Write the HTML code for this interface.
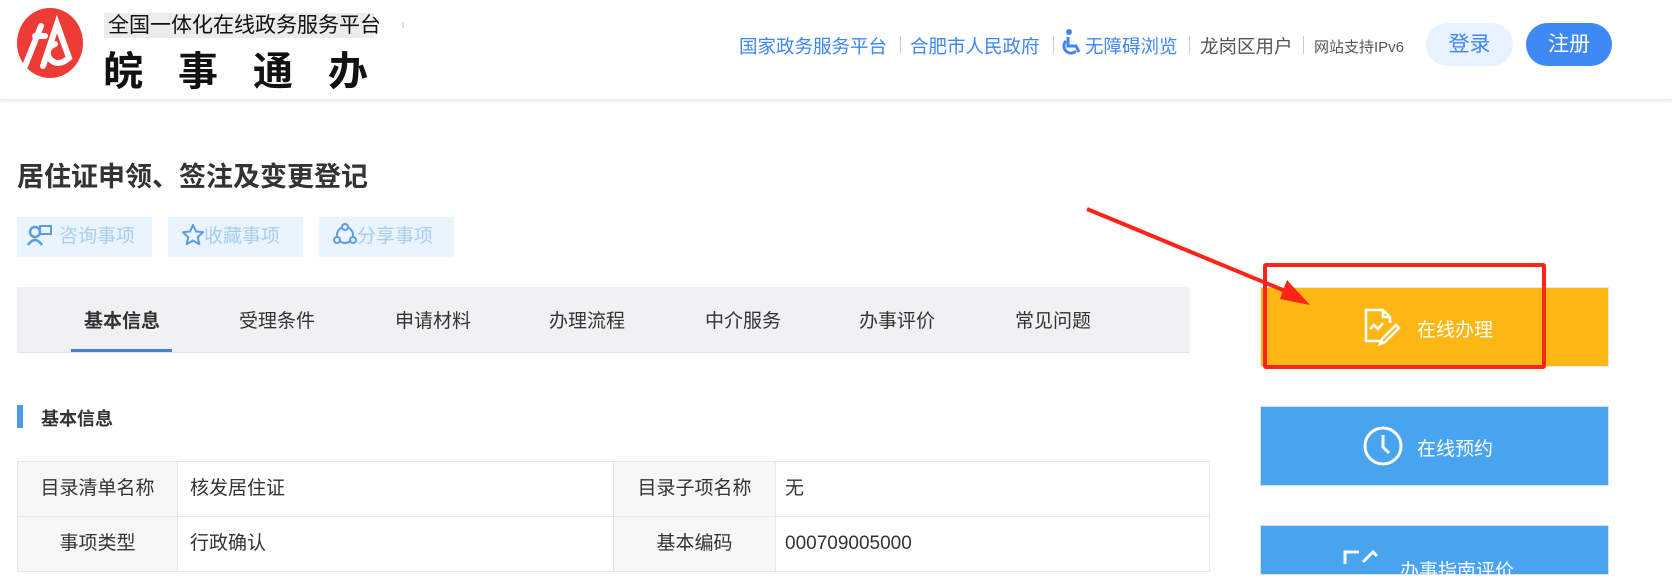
<!DOCTYPE html>
<html><head><meta charset="utf-8"><style>
*{margin:0;padding:0;box-sizing:border-box}
body{width:1672px;height:561px;overflow:hidden;background:#fff;font-family:"Liberation Sans","Noto Sans CJK SC",sans-serif;position:relative;color:#333}
.a{position:absolute;white-space:nowrap}
.hdr{position:absolute;left:0;top:0;width:1672px;height:100px;background:#fff;box-shadow:0 2px 3px rgba(0,0,0,.06);border-bottom:1px solid #eee}
.nav{font-size:18.5px;color:#3e86f2;top:33px}
.sep{position:absolute;width:1px;height:18px;background:#ccc;top:36px}
.tab{top:306px;font-size:19px;color:#333}
.act{position:absolute;top:217px;height:40px;background:#e9f4fe;color:#a8cdf2;font-size:19px;line-height:40px}
.tb{position:absolute;border:1px solid #e6e6e6;font-size:19px;color:#333;line-height:54px}
</style></head><body>
<div class="hdr"></div>
<svg class="a" style="left:17px;top:8px" width="66" height="70" viewBox="0 0 66 70">
<ellipse cx="33" cy="35" rx="33" ry="35" fill="#ee3b35"/>
<path d="M8 58 L24 18 M18 28 h10 M26 58 L40 16 L52 50 Q40 60 32 50 Q28 40 38 36" stroke="#fff" stroke-width="6" fill="none" stroke-linecap="round"/>
</svg>
<div class="a" style="left:104px;top:13px;width:270px;height:25px;background:#ececec;font-size:21px;line-height:25px;padding-left:4px;color:#111">全国一体化在线政务服务平台</div>
<div class="a" style="left:103px;top:39px;font-size:40px;font-weight:bold;letter-spacing:35px;color:#111">皖事通办</div>
<div class="a" style="left:402px;top:22px;width:2px;height:6px;background:#ddd"></div>

<div class="a nav" style="left:739px">国家政务服务平台</div>
<div class="sep" style="left:900px"></div>
<div class="a nav" style="left:910px">合肥市人民政府</div>
<div class="sep" style="left:1053px"></div>
<svg class="a" style="left:1062px;top:29px" width="22" height="26" viewBox="0 0 22 26"><circle cx="7" cy="3" r="3" fill="#3e86f2"/><path d="M6 8 v9 h8 l3 6 M4 12 a7 7 0 1 0 10 10" stroke="#3e86f2" stroke-width="3" fill="none"/></svg>
<div class="a nav" style="left:1085px">无障碍浏览</div>
<div class="sep" style="left:1189px"></div>
<div class="a nav" style="left:1200px;color:#555">龙岗区用户</div>
<div class="sep" style="left:1303px"></div>
<div class="a" style="left:1314px;top:36px;font-size:15px;color:#555">网站支持IPv6</div>
<div class="a" style="left:1426px;top:23px;width:87px;height:43px;border-radius:22px;background:#e8f2fe;color:#3e86f2;font-size:21px;line-height:43px;text-align:center">登录</div>
<div class="a" style="left:1526px;top:23px;width:86px;height:43px;border-radius:22px;background:#3d8af4;color:#fff;font-size:21px;line-height:43px;text-align:center">注册</div>

<div class="a" style="left:17px;top:155px;font-size:27px;font-weight:bold;color:#333">居住证申领、签注及变更登记</div>

<div class="act" style="left:17px;width:135px;padding-left:10px"><svg style="vertical-align:-4px;margin-right:6px" width="26" height="22" viewBox="0 0 26 22"><circle cx="8" cy="8" r="5" fill="none" stroke="#5b9be0" stroke-width="2.5"/><path d="M1 21 q7-10 14 0" fill="none" stroke="#5b9be0" stroke-width="2.5"/><rect x="13" y="2" width="11" height="8" fill="none" stroke="#5b9be0" stroke-width="2"/></svg>咨询事项</div>
<div class="act" style="left:168px;width:135px;padding-left:14px"><svg style="vertical-align:-3px" width="22" height="21" viewBox="0 0 22 21"><path d="M11 1 l3 6.5 7 .8 -5.2 4.8 1.4 7 -6.2-3.6 -6.2 3.6 1.4-7 L1 8.3 l7-.8z" fill="none" stroke="#5b9be0" stroke-width="2"/></svg>收藏事项</div>
<div class="act" style="left:319px;width:135px;padding-left:14px"><svg style="vertical-align:-3px" width="24" height="22" viewBox="0 0 24 22"><circle cx="12" cy="12" r="8" fill="none" stroke="#5b9be0" stroke-width="2"/><circle cx="12" cy="4" r="3" fill="#e9f4fe" stroke="#5b9be0" stroke-width="2"/><circle cx="4" cy="17" r="3" fill="#e9f4fe" stroke="#5b9be0" stroke-width="2"/><circle cx="20" cy="17" r="3" fill="#e9f4fe" stroke="#5b9be0" stroke-width="2"/></svg>分享事项</div>

<div class="a" style="left:17px;top:287px;width:1173px;height:66px;background:#f0f1f3;border-bottom:1px solid #e4e5e7"></div>
<div class="a tab" style="left:84px;font-weight:bold">基本信息</div>
<div class="a" style="left:71px;top:349px;width:101px;height:3px;background:#4a7fd0"></div>
<div class="a tab" style="left:239px">受理条件</div>
<div class="a tab" style="left:395px">申请材料</div>
<div class="a tab" style="left:549px">办理流程</div>
<div class="a tab" style="left:705px">中介服务</div>
<div class="a tab" style="left:859px">办事评价</div>
<div class="a tab" style="left:1015px">常见问题</div>

<div class="a" style="left:17px;top:405px;width:6px;height:23px;background:#4a9bef"></div>
<div class="a" style="left:41px;top:405px;font-size:18px;font-weight:bold;color:#333">基本信息</div>

<div class="tb" style="left:17px;top:461px;width:161px;height:56px;background:#f7f7f7;text-align:center">目录清单名称</div>
<div class="tb" style="left:177px;top:461px;width:437px;height:56px;padding-left:12px">核发居住证</div>
<div class="tb" style="left:613px;top:461px;width:163px;height:56px;background:#f7f7f7;text-align:center">目录子项名称</div>
<div class="tb" style="left:775px;top:461px;width:435px;height:56px;padding-left:9px">无</div>
<div class="tb" style="left:17px;top:516px;width:161px;height:56px;background:#f7f7f7;text-align:center">事项类型</div>
<div class="tb" style="left:177px;top:516px;width:437px;height:56px;padding-left:12px">行政确认</div>
<div class="tb" style="left:613px;top:516px;width:163px;height:56px;background:#f7f7f7;text-align:center">基本编码</div>
<div class="tb" style="left:775px;top:516px;width:435px;height:56px;padding-left:9px">000709005000</div>

<div class="a" style="left:1260px;top:287px;width:349px;height:80px;background:#fdb714;border:1px solid #e8e8e8"></div>
<svg class="a" style="left:1363px;top:307px" width="40" height="40" viewBox="0 0 40 40"><path d="M20 34 H3 V3 H20 l7 7 v6 M20 3 v7 h7" fill="none" stroke="#fff" stroke-width="2.5"/><path d="M7 22 l4-4 4 4 5-6" fill="none" stroke="#fff" stroke-width="2.5"/><path d="M36 21 l-14 14 -5 2 2-5 14-14 z" fill="none" stroke="#fff" stroke-width="2.5"/></svg>
<div class="a" style="left:1417px;top:315px;font-size:19px;color:#fff">在线办理</div>

<div class="a" style="left:1260px;top:406px;width:349px;height:80px;background:#49a4ef;border:1px solid #dde"></div>
<svg class="a" style="left:1363px;top:426px" width="40" height="40" viewBox="0 0 40 40"><circle cx="20" cy="20" r="18" fill="none" stroke="#fff" stroke-width="3"/><path d="M20 9 v12 l6 6" fill="none" stroke="#fff" stroke-width="3"/></svg>
<div class="a" style="left:1417px;top:434px;font-size:19px;color:#fff">在线预约</div>

<div class="a" style="left:1260px;top:525px;width:349px;height:50px;background:#49a4ef;border:1px solid #dde"></div>
<svg class="a" style="left:1343px;top:550px" width="40" height="14" viewBox="0 0 40 14"><path d="M2 14 V2 h14 M20 12 l10-10 4 4" fill="none" stroke="#fff" stroke-width="3"/></svg>
<div class="a" style="left:1400px;top:556px;font-size:19px;color:#fff">办事指南评价</div>

<div class="a" style="left:1263px;top:263px;width:283px;height:106px;border:4px solid #ff2418;border-radius:3px"></div>
<svg class="a" style="left:0;top:0" width="1672" height="561"><path d="M1087 209 L1290 293" stroke="#ff2418" stroke-width="4"/><path d="M1310 305 L1287 280 L1280 299 Z" fill="#ff2418"/></svg>
</body></html>
